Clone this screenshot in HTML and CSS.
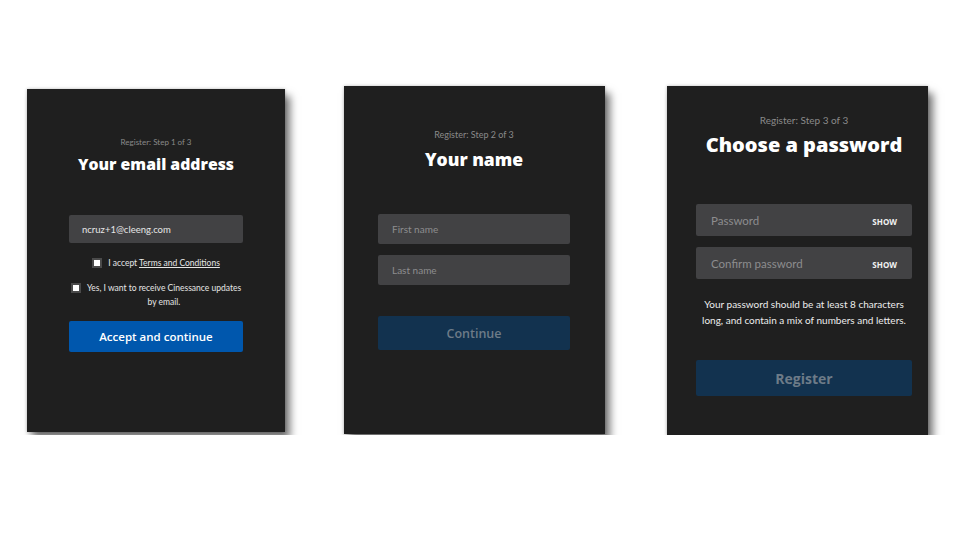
FILE: index.html
```html
<!DOCTYPE html>
<html lang="en">
<head>
<meta charset="UTF-8" />
<meta name="viewport" content="width=device-width, initial-scale=1" />
<title>Register steps</title>
<link rel="stylesheet" href="styles.css">
</head>
<body>

<main class="steps">

  <section class="card card-email">
    <div class="step">Register: Step 1 of 3</div>
    <h1 class="title">Your email address</h1>
    <div class="field field-first">ncruz+1@cleeng.com</div>
    <label class="check check-terms"><span class="box"></span><span>I accept <u>Terms and Conditions</u></span></label>
    <label class="check check-news"><span class="box"></span><span>Yes, I want to receive Cinessance updates<br>by email.</span></label>
    <button class="btn btn-active">Accept and continue</button>
  </section>

  <section class="card card-name">
    <div class="step">Register: Step 2 of 3</div>
    <h1 class="title">Your name</h1>
    <div class="field field-first">First name</div>
    <div class="field">Last name</div>
    <button class="btn btn-disabled">Continue</button>
  </section>

  <section class="card card-pass">
    <div class="step">Register: Step 3 of 3</div>
    <h1 class="title">Choose a password</h1>
    <div class="field field-first"><span>Password</span><span class="show">SHOW</span></div>
    <div class="field"><span>Confirm password</span><span class="show">SHOW</span></div>
    <p class="hint">Your password should be at least 8 characters<br>long, and contain a mix of numbers and letters.</p>
    <button class="btn btn-disabled">Register</button>
  </section>

</main>

</body>
</html>
```

FILE: styles.css
```css
body {
  margin: 0;
  background: #fff;
  font-family: Lato, 'Noto Sans', sans-serif;
  color: #fff;
}
.steps {
  display: flex;
  align-items: flex-start;
  padding: 86px 0 0 27px;
}
.card {
  background: #1f1f1f;
  box-shadow: 5px 7px 8px rgba(0,0,0,0.55), 0 0 3px rgba(0,0,0,0.25);
  display: flex;
  flex-direction: column;
  align-items: stretch;
  text-align: center;
  box-sizing: border-box;
}
.step {
  color: #8a8a8a;
  font-size: 9px;
  line-height: 12px;
}
.title {
  margin: 0;
  font-family: 'Open Sans', Lato, sans-serif;
  font-weight: 800;
  color: #fff;
}
.field {
  background: #424244;
  border-radius: 2px;
  display: flex;
  align-items: center;
  justify-content: space-between;
  color: #8d8d8f;
  text-align: left;
}
.btn {
  border: none;
  border-radius: 2px;
  font-family: 'Open Sans', Lato, sans-serif;
  font-weight: 600;
  padding: 0;
  cursor: pointer;
}
.btn-active {
  background: #0057ad;
  color: #fff;
}
.btn-disabled {
  background: #12324f;
  color: #6d7b88;
  cursor: not-allowed;
}

/* step 1 */
.card-email {
  width: 258px;
  height: 343px;
  margin-top: 3px;
  padding: 47px 42px 0;
}
.card-email .step {
  font-size: 8px;
}
.card-email .title {
  font-size: 15.8px;
  line-height: 20px;
  margin-top: 6px;
}
.card-email .field {
  height: 28px;
  margin-top: 41px;
  padding-left: 13px;
  font-size: 9.5px;
  color: #e6e6e6;
}
.check {
  display: flex;
  justify-content: center;
  align-items: flex-start;
  gap: 6px;
  font-size: 8.5px;
  line-height: 14px;
  color: #e6e6e6;
}
.check u {
  text-decoration-thickness: 1px;
  text-underline-offset: 1px;
}
.box {
  width: 6px;
  height: 6px;
  margin-top: 2px;
  background: #fff;
  border: 2px solid #4a4a4a;
  flex: none;
}
.check-terms {
  margin-top: 13px;
}
.check-news {
  margin-top: 11px;
}
.check-news span:last-child {
  text-align: center;
}
.card-email .btn {
  height: 31px;
  margin-top: 12px;
  font-size: 11.5px;
}

/* step 2 */
.card-name {
  width: 261px;
  height: 348px;
  margin-left: 59px;
  padding: 43px 35px 0 34px;
}
.card-name .title {
  font-size: 17.5px;
  line-height: 22px;
  margin-top: 7px;
}
.card-name .field {
  height: 30px;
  margin-bottom: 11px;
  padding-left: 14px;
  font-size: 10px;
}
.card-name .field-first {
  margin-top: 44px;
}
.card-name .btn {
  height: 34px;
  margin-top: 20px;
  font-size: 12.5px;
}

/* step 3 */
.card-pass {
  width: 261px;
  height: 349px;
  margin-left: 62px;
  padding: 28px 16px 0 29px;
}
.card-pass .step {
  font-size: 10px;
}
.card-pass .title {
  font-size: 20px;
  line-height: 24px;
  margin-top: 7px;
}
.card-pass .field {
  height: 32px;
  margin-bottom: 11px;
  padding: 0 15px 0 15px;
  font-size: 11.5px;
}
.card-pass .field-first {
  margin-top: 47px;
}
.show {
  font-family: 'Open Sans', Lato, sans-serif;
  font-weight: 700;
  font-size: 8px;
  color: #f2f2f2;
  margin-top: 2px;
}
.hint {
  margin: 6px 0 0;
  font-size: 10px;
  line-height: 16px;
  color: #ededed;
}
.card-pass .btn {
  height: 36px;
  margin-top: 32px;
  font-size: 14px;
  font-weight: 700;
}
```
